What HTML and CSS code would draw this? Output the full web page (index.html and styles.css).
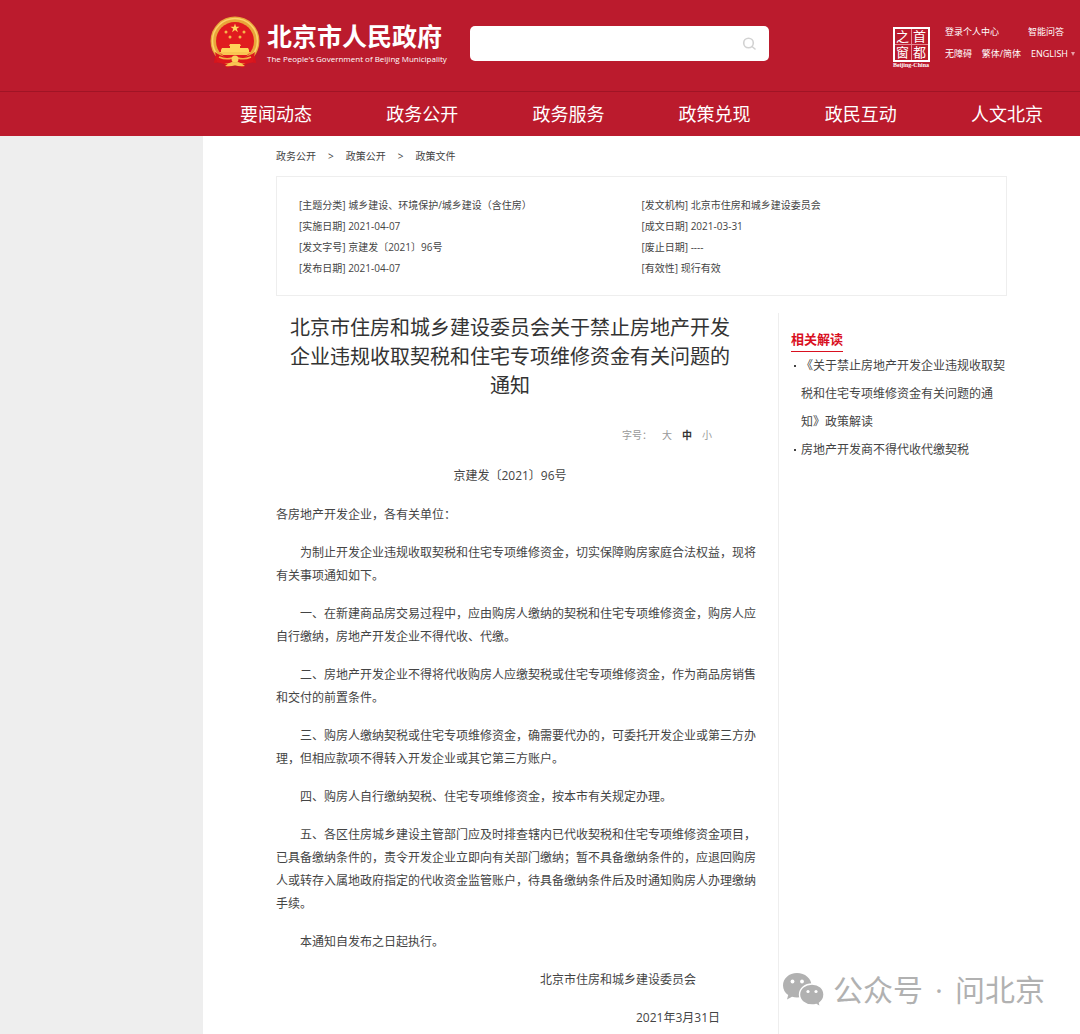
FILE: index.html
```html
<!DOCTYPE html>
<html lang="zh-CN">
<head>
    <meta charset="UTF-8">
    <meta name="viewport" content="width=device-width, initial-scale=1.0">
    <title>北京市人民政府</title>
    <link rel="stylesheet" href="styles.css">
</head>
<body>
    <header class="header">
        <div class="header-top">
            <a class="logo" href="#">
                <svg class="emblem" viewBox="0 0 50 54" aria-hidden="true">
                    <path d="M6 35 L4 47 Q13 45 17 52 L25 48 L33 52 Q37 45 46 47 L44 35Z" fill="#d8141c"/>
                    <circle cx="25" cy="25" r="24.500" fill="#e9a63a"/>
                    <circle cx="25" cy="25" r="22.500" fill="none" stroke="#fbd36a" stroke-width="1.500"/>
                    <circle cx="25" cy="25" r="19" fill="#e01b1f"/>
                    <path d="M25 7.500l1.100 3.300h3.500l-2.800 2 1.100 3.400-2.900-2.100-2.900 2.100 1.100-3.400-2.800-2h3.500z" fill="#ffd95e"/>
                    <g fill="#f6b64a">
                        <circle cx="16" cy="16" r="1.500"/>
                        <circle cx="34" cy="16" r="1.500"/>
                        <circle cx="20" cy="21" r="1.500"/>
                        <circle cx="30" cy="21" r="1.500"/>
                    </g>
                    <path d="M20 28h10l1 2h-1v2h8l1 2v3H11v-3l1-2h8v-2h-1z" fill="#ffd35a"/>
                    <path d="M9 36h32l-4 3H13z" fill="#f9c552"/>
                    <path d="M5 36 Q12 42 22 41 L25 39 L28 41 Q38 42 45 36 L43 46 Q34 49 28 46 L25 44 L22 46 Q16 49 7 46Z" fill="#dc171d"/>
                    <path d="M9 41q7 3 13 1M41 41q-7 3-13 1" fill="none" stroke="#f4b144" stroke-width="1.500"/>
                    <circle cx="25" cy="43" r="3.500" fill="#fbd05a"/>
                    <path d="M15 50q5-5 10-3 5-2 10 3-6 1-10-1-4 2-10 1z" fill="#f9c552"/>
                </svg>
                <span class="logo-text">
                    <span class="logo-name">北京市人民政府</span>
                    <span class="logo-en">The People's Government of Beijing Municipality</span>
                </span>
            </a>

            <form class="search">
                <input class="search-input" type="text" aria-label="搜索">
                <button class="search-btn" type="button" aria-label="搜索">
                    <svg width="14" height="14" viewBox="0 0 14 14" fill="none" stroke="#d2d2d2" stroke-width="1.600">
                        <circle cx="6.500" cy="6" r="4.800"/>
                        <path d="M10 9.500l3 2.500" stroke-linecap="round"/>
                    </svg>
                </button>
            </form>

            <div class="header-right">
                <a class="seal" href="#">
                    <span class="seal-box">
                        <span>之</span><span>首</span>
                        <span>窗</span><span>都</span>
                    </span>
                    <span class="seal-en">Beijing-China</span>
                </a>
                <div class="tools">
                    <div class="tools-row tools-wide">
                        <a href="#">登录个人中心</a>
                        <a href="#">智能问答</a>
                    </div>
                    <div class="tools-row">
                        <a href="#">无障碍</a>
                        <a href="#">繁体/简体</a>
                        <a class="lang" href="#">ENGLISH
                            <svg width="4" height="4" viewBox="0 0 4 4" aria-hidden="true"><path d="M0 0h4L2 4z" fill="#e8a0a6"/></svg>
                        </a>
                    </div>
                </div>
            </div>
        </div>

        <nav class="nav">
            <a href="#">要闻动态</a>
            <a href="#">政务公开</a>
            <a href="#">政务服务</a>
            <a href="#">政策兑现</a>
            <a href="#">政民互动</a>
            <a href="#">人文北京</a>
        </nav>
    </header>

    <main class="page">
        <div class="crumbs">
            <a href="#">政务公开</a>
            <span>&gt;</span>
            <a href="#">政策公开</a>
            <span>&gt;</span>
            <a href="#">政策文件</a>
        </div>

        <div class="info">
            <ul>
                <li>[主题分类] 城乡建设、环境保护/城乡建设（含住房）</li>
                <li>[实施日期] 2021-04-07</li>
                <li>[发文字号] 京建发〔2021〕96号</li>
                <li>[发布日期] 2021-04-07</li>
            </ul>
            <ul>
                <li>[发文机构] 北京市住房和城乡建设委员会</li>
                <li>[成文日期] 2021-03-31</li>
                <li>[废止日期] ----</li>
                <li>[有效性] 现行有效</li>
            </ul>
        </div>

        <div class="content">
            <article class="article">
                <h1>北京市住房和城乡建设委员会关于禁止房地产开发企业违规收取契税和住宅专项维修资金有关问题的通知</h1>
                <div class="font-size">
                    <span>字号：</span>
                    <button type="button">大</button>
                    <button type="button" class="active">中</button>
                    <button type="button">小</button>
                </div>
                <p class="doc-no">京建发〔2021〕96号</p>
                <p class="no-indent">各房地产开发企业，各有关单位：</p>
                <p>为制止开发企业违规收取契税和住宅专项维修资金，切实保障购房家庭合法权益，现将有关事项通知如下。</p>
                <p>一、在新建商品房交易过程中，应由购房人缴纳的契税和住宅专项维修资金，购房人应自行缴纳，房地产开发企业不得代收、代缴。</p>
                <p>二、房地产开发企业不得将代收购房人应缴契税或住宅专项维修资金，作为商品房销售和交付的前置条件。</p>
                <p>三、购房人缴纳契税或住宅专项维修资金，确需要代办的，可委托开发企业或第三方办理，但相应款项不得转入开发企业或其它第三方账户。</p>
                <p>四、购房人自行缴纳契税、住宅专项维修资金，按本市有关规定办理。</p>
                <p>五、各区住房城乡建设主管部门应及时排查辖内已代收契税和住宅专项维修资金项目，已具备缴纳条件的，责令开发企业立即向有关部门缴纳；暂不具备缴纳条件的，应退回购房人或转存入属地政府指定的代收资金监管账户，待具备缴纳条件后及时通知购房人办理缴纳手续。</p>
                <p>本通知自发布之日起执行。</p>
                <p class="sign-org">北京市住房和城乡建设委员会</p>
                <p class="sign-date">2021年3月31日</p>
            </article>

            <aside class="related">
                <h2>相关解读</h2>
                <ul>
                    <li><a href="#">《关于禁止房地产开发企业违规收取契税和住宅专项维修资金有关问题的通知》政策解读</a></li>
                    <li><a href="#">房地产开发商不得代收代缴契税</a></li>
                </ul>
            </aside>
        </div>
    </main>

    <div class="watermark">
        <svg width="42" height="34" viewBox="0 0 42 34" aria-hidden="true">
            <path d="M14 0C6 0 0 5.500 0 12.500c0 4 2 7.300 5.200 9.500L4 26.500l5-2.700c1.600.5 3.300.7 5 .7 8 0 14.500-5 14.500-12S22 0 14 0z" fill="#b1b1b1"/>
            <circle cx="9.500" cy="8.500" r="1.900" fill="#fff"/>
            <circle cx="19" cy="8.500" r="1.900" fill="#fff"/>
            <path d="M29 11c-7 0-12.500 4.600-12.500 10.500S22 32 29 32c1.500 0 3-.2 4.300-.6L37.500 34l-1-4c2.800-2 4.500-5 4.500-8.500C41 15.600 36 11 29 11z" fill="#b1b1b1" stroke="#fff" stroke-width="1.400"/>
            <circle cx="25" cy="18.500" r="1.600" fill="#fff"/>
            <circle cx="33" cy="18.500" r="1.600" fill="#fff"/>
        </svg>
        <span>公众号</span>
        <span class="dot">·</span>
        <span>问北京</span>
    </div>
</body>
</html>
```
FILE: styles.css
```css
* {
    box-sizing: border-box;
}

body {
    margin: 0;
    font-family: "Open Sans", "Noto Sans CJK SC", sans-serif;
    font-size: 12px;
    color: #444;
    background-color: #eee;
    min-height: 100vh;
    display: flex;
    flex-direction: column;
}

a {
    color: inherit;
    text-decoration: none;
}

ul {
    list-style: none;
    margin: 0;
    padding: 0;
}

/* Header */
.header {
    background-color: #bb1b2d;
    color: #fff;
}

.header-top {
    display: flex;
    align-items: flex-start;
    height: 91px;
    padding: 16px 5px 0 210px;
}

.logo {
    display: flex;
    gap: 7px;
    width: 260px;
    flex-shrink: 0;
}

.emblem {
    width: 50px;
    height: 54px;
}

.logo-text {
    display: flex;
    flex-direction: column;
    padding-top: 5px;
    white-space: nowrap;
}

.logo-name {
    font-size: 25px;
    font-weight: bold;
    line-height: 30px;
}

.logo-en {
    font-size: 8px;
    line-height: 16px;
}

.search {
    display: flex;
    width: 299px;
    height: 35px;
    margin-top: 10px;
    padding-right: 13px;
    background-color: #fff;
    border-radius: 5px;
}

.search-input {
    flex: 1;
    min-width: 0;
    padding: 0 12px;
    border: 0;
    background: none;
    outline: none;
    font: inherit;
}

.search-btn {
    display: flex;
    align-items: center;
    padding: 0;
    border: 0;
    background: none;
}

.header-right {
    display: flex;
    gap: 14px;
    margin-left: auto;
    padding-top: 11px;
}

.seal {
    display: flex;
    flex-direction: column;
    align-items: center;
    width: 40px;
}

.seal-box {
    display: grid;
    grid-template-columns: 1fr 1fr;
    gap: 1px;
    width: 37px;
    height: 35px;
    border: 2px solid #fff;
    background-color: #e58a92;
    font-size: 13px;
    line-height: 15px;
    text-align: center;
}

.seal-box span {
    background-color: #bb1b2d;
}

.seal-en {
    font-family: "Liberation Serif", serif;
    font-size: 6px;
    font-weight: bold;
    line-height: 7px;
}

.tools {
    width: 130px;
    font-size: 9px;
    line-height: 22px;
    margin-top: -6px;
    white-space: nowrap;
}

.tools-row {
    display: flex;
    justify-content: space-between;
}

.tools-wide {
    padding-right: 11px;
}

.lang {
    display: flex;
    align-items: center;
    gap: 3px;
}

.nav {
    display: flex;
    padding-left: 203px;
    border-top: 1px solid #a01425;
}

.nav a {
    flex: 1;
    font-size: 18px;
    line-height: 44px;
    text-align: center;
}

/* Page body */
.page {
    flex: 1;
    margin-left: 203px;
    padding: 10px 73px 0;
    background-color: #fff;
    display: flex;
    flex-direction: column;
}

.crumbs {
    display: flex;
    gap: 12px;
    font-size: 10px;
    line-height: 21px;
}

.info {
    display: flex;
    margin-top: 9px;
    padding: 18px 22px 16px;
    border: 1px solid #eee;
    font-size: 10px;
    line-height: 21px;
}

.info ul {
    flex: 1;
}

.content {
    flex: 1;
    display: flex;
    margin-top: 17px;
}

.article {
    width: 502px;
    padding-right: 22px;
    flex-shrink: 0;
}

.article h1 {
    margin: 0;
    padding: 0 18px 0 6px;
    font-size: 20px;
    font-weight: normal;
    line-height: 29px;
    color: #333;
    text-align: center;
}

.font-size {
    display: flex;
    justify-content: flex-end;
    gap: 10px;
    margin: 25px 44px 18px 0;
    font-size: 10px;
    line-height: 21px;
    color: #999;
}

.font-size button {
    padding: 0;
    border: 0;
    background: none;
    font: inherit;
    color: inherit;
}

.font-size .active {
    color: #333;
    font-weight: bold;
}

.article p {
    margin: 0 0 15px;
    line-height: 23px;
    text-indent: 2em;
}

.article .no-indent {
    text-indent: 0;
}

.article .doc-no {
    margin-bottom: 16px;
    padding-right: 12px;
    text-indent: 0;
    text-align: center;
}

.article .sign-org {
    padding-right: 5em;
    text-align: right;
}

.article .sign-date {
    margin-bottom: 0;
    padding-right: 3em;
    text-align: right;
}

.related {
    flex: 1;
    padding: 15px 0 0 12px;
    border-left: 1px solid #eee;
}

.related h2 {
    display: inline-block;
    margin: 0;
    padding-bottom: 1px;
    font-size: 13px;
    line-height: 22px;
    color: #d9101f;
    border-bottom: 1px solid #d9101f;
}

.related li {
    position: relative;
    padding-left: 10px;
    line-height: 28px;
}

.related li::before {
    content: "";
    position: absolute;
    left: 3px;
    top: 13px;
    width: 2px;
    height: 2px;
    background-color: #444;
}

/* Account mark over the page corner */
.watermark {
    position: absolute;
    right: 35px;
    bottom: 22px;
    display: flex;
    align-items: center;
    font-size: 30px;
    line-height: 44px;
    color: #b1b1b1;
}

.watermark svg {
    margin-right: 8px;
}

.watermark .dot {
    padding: 0 12px;
}
```
